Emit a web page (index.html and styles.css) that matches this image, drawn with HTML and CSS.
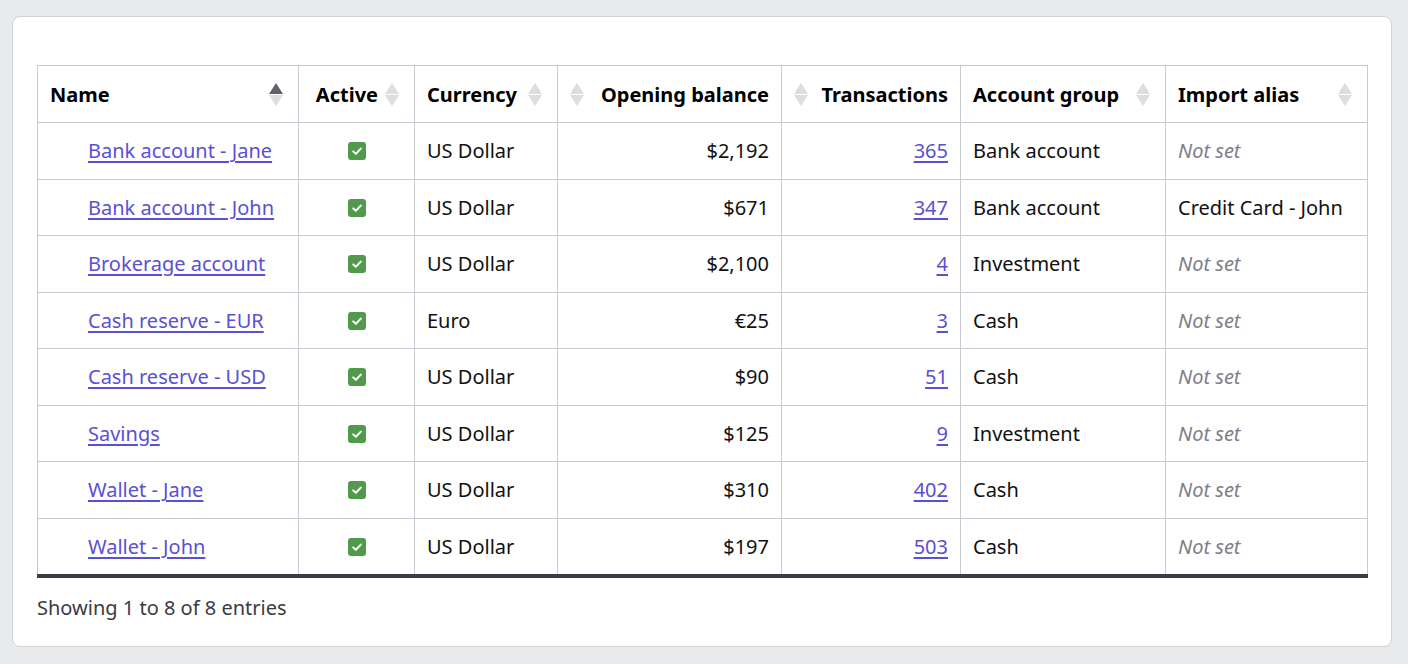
FILE: index.html
```html
<!DOCTYPE html>
<html lang="en">
<head>
<meta charset="utf-8">
<title>Accounts</title>
<link rel="stylesheet" href="styles.css">
</head>
<body>
<div class="card">
  <table class="accounts">
    <colgroup>
      <col class="c-name"><col class="c-active"><col class="c-currency"><col class="c-opening"><col class="c-tx"><col class="c-group"><col class="c-alias">
    </colgroup>
    <thead>
      <tr>
        <th><div class="th-in"><span>Name</span><span class="sort asc"><i class="up"></i><i class="down"></i></span></div></th>
        <th><div class="th-in th-center"><span>Active</span><span class="sort"><i class="up"></i><i class="down"></i></span></div></th>
        <th><div class="th-in"><span>Currency</span><span class="sort"><i class="up"></i><i class="down"></i></span></div></th>
        <th><div class="th-in th-right"><span class="sort"><i class="up"></i><i class="down"></i></span><span>Opening balance</span></div></th>
        <th><div class="th-in th-right"><span class="sort"><i class="up"></i><i class="down"></i></span><span>Transactions</span></div></th>
        <th><div class="th-in"><span>Account group</span><span class="sort"><i class="up"></i><i class="down"></i></span></div></th>
        <th><div class="th-in"><span>Import alias</span><span class="sort"><i class="up"></i><i class="down"></i></span></div></th>
      </tr>
    </thead>
    <tbody>
      <tr>
        <td class="name"><a href="#">Bank account - Jane</a></td>
        <td class="center"><span class="check"><svg viewBox="0 0 18 18" width="18" height="18"><path d="M5.2 9.4 L7.8 11.9 L12.8 6.6" fill="none" stroke="#fff" stroke-width="2" stroke-linecap="round" stroke-linejoin="round"/></svg></span></td>
        <td>US Dollar</td>
        <td class="num">$2,192</td>
        <td class="num"><a href="#">365</a></td>
        <td>Bank account</td>
        <td class="muted">Not set</td>
      </tr>
      <tr>
        <td class="name"><a href="#">Bank account - John</a></td>
        <td class="center"><span class="check"><svg viewBox="0 0 18 18" width="18" height="18"><path d="M5.2 9.4 L7.8 11.9 L12.8 6.6" fill="none" stroke="#fff" stroke-width="2" stroke-linecap="round" stroke-linejoin="round"/></svg></span></td>
        <td>US Dollar</td>
        <td class="num">$671</td>
        <td class="num"><a href="#">347</a></td>
        <td>Bank account</td>
        <td>Credit Card - John</td>
      </tr>
      <tr>
        <td class="name"><a href="#">Brokerage account</a></td>
        <td class="center"><span class="check"><svg viewBox="0 0 18 18" width="18" height="18"><path d="M5.2 9.4 L7.8 11.9 L12.8 6.6" fill="none" stroke="#fff" stroke-width="2" stroke-linecap="round" stroke-linejoin="round"/></svg></span></td>
        <td>US Dollar</td>
        <td class="num">$2,100</td>
        <td class="num"><a href="#">4</a></td>
        <td>Investment</td>
        <td class="muted">Not set</td>
      </tr>
      <tr>
        <td class="name"><a href="#">Cash reserve - EUR</a></td>
        <td class="center"><span class="check"><svg viewBox="0 0 18 18" width="18" height="18"><path d="M5.2 9.4 L7.8 11.9 L12.8 6.6" fill="none" stroke="#fff" stroke-width="2" stroke-linecap="round" stroke-linejoin="round"/></svg></span></td>
        <td>Euro</td>
        <td class="num">€25</td>
        <td class="num"><a href="#">3</a></td>
        <td>Cash</td>
        <td class="muted">Not set</td>
      </tr>
      <tr>
        <td class="name"><a href="#">Cash reserve - USD</a></td>
        <td class="center"><span class="check"><svg viewBox="0 0 18 18" width="18" height="18"><path d="M5.2 9.4 L7.8 11.9 L12.8 6.6" fill="none" stroke="#fff" stroke-width="2" stroke-linecap="round" stroke-linejoin="round"/></svg></span></td>
        <td>US Dollar</td>
        <td class="num">$90</td>
        <td class="num"><a href="#">51</a></td>
        <td>Cash</td>
        <td class="muted">Not set</td>
      </tr>
      <tr>
        <td class="name"><a href="#">Savings</a></td>
        <td class="center"><span class="check"><svg viewBox="0 0 18 18" width="18" height="18"><path d="M5.2 9.4 L7.8 11.9 L12.8 6.6" fill="none" stroke="#fff" stroke-width="2" stroke-linecap="round" stroke-linejoin="round"/></svg></span></td>
        <td>US Dollar</td>
        <td class="num">$125</td>
        <td class="num"><a href="#">9</a></td>
        <td>Investment</td>
        <td class="muted">Not set</td>
      </tr>
      <tr>
        <td class="name"><a href="#">Wallet - Jane</a></td>
        <td class="center"><span class="check"><svg viewBox="0 0 18 18" width="18" height="18"><path d="M5.2 9.4 L7.8 11.9 L12.8 6.6" fill="none" stroke="#fff" stroke-width="2" stroke-linecap="round" stroke-linejoin="round"/></svg></span></td>
        <td>US Dollar</td>
        <td class="num">$310</td>
        <td class="num"><a href="#">402</a></td>
        <td>Cash</td>
        <td class="muted">Not set</td>
      </tr>
      <tr>
        <td class="name"><a href="#">Wallet - John</a></td>
        <td class="center"><span class="check"><svg viewBox="0 0 18 18" width="18" height="18"><path d="M5.2 9.4 L7.8 11.9 L12.8 6.6" fill="none" stroke="#fff" stroke-width="2" stroke-linecap="round" stroke-linejoin="round"/></svg></span></td>
        <td>US Dollar</td>
        <td class="num">$197</td>
        <td class="num"><a href="#">503</a></td>
        <td>Cash</td>
        <td class="muted">Not set</td>
      </tr>
    </tbody>
  </table>
  <div class="info">Showing 1 to 8 of 8 entries</div>
</div>
</body>
</html>
```

FILE: styles.css
```css
html, body {
  margin: 0;
  padding: 0;
}
body {
  background: #e9eaec;
  padding: 16px 16px 0 12px;
  font-family: "Noto Sans", "Open Sans", sans-serif;
  font-size: 20px;
  color: #111;
}
.card {
  width: 1330px;
  background: #fff;
  border: 1px solid #d2d3d7;
  border-radius: 8px;
  padding: 48px 24px 25px 24px;
}
.accounts {
  width: 1330px;
  table-layout: fixed;
  border-collapse: collapse;
  border-bottom: 4px solid #373d49;
}
.c-name { width: 261px; }
.c-active { width: 116px; }
.c-currency { width: 143px; }
.c-opening { width: 224px; }
.c-tx { width: 179px; }
.c-group { width: 205px; }
.c-alias { width: 202px; }

.accounts th,
.accounts td {
  border: 1px solid #c9c9d1;
  padding: 0 12px;
  white-space: nowrap;
  overflow: hidden;
}
.accounts th {
  height: 56px;
  font-weight: 700;
  color: #000;
  text-align: left;
}
.accounts td {
  height: 55.5px;
}
.th-in {
  display: flex;
  align-items: center;
  justify-content: space-between;
  gap: 4px;
}
.th-center {
  justify-content: flex-end;
}
.th-center .sort {
  margin-left: 3px;
}
.sort {
  display: flex;
  flex-direction: column;
  align-items: center;
  gap: 1px;
  width: 14px;
  margin-right: 3px;
}
.th-right .sort {
  margin-right: 0;
  margin-left: 0;
}
.sort i {
  display: block;
  width: 0;
  height: 0;
  border-left: 7px solid transparent;
  border-right: 7px solid transparent;
}
.sort .up {
  border-bottom: 11px solid #dcdde1;
}
.sort .down {
  border-top: 11px solid #dcdde1;
}
.sort.asc .up {
  border-bottom-color: #62626f;
}
.accounts td.name {
  padding-left: 50px;
}
.accounts a {
  color: #5a50d2;
  text-decoration: underline;
  text-underline-offset: 3px;
}
.center {
  text-align: center;
}
.num {
  text-align: right;
}
.muted {
  font-style: italic;
  color: #7e7e88;
}
.check {
  display: inline-block;
  width: 18px;
  height: 18px;
  background: #51994b;
  border-radius: 3px;
  vertical-align: -2px;
}
.check svg {
  display: block;
}
.info {
  margin-top: 16px;
  color: #3a3a44;
}
```
